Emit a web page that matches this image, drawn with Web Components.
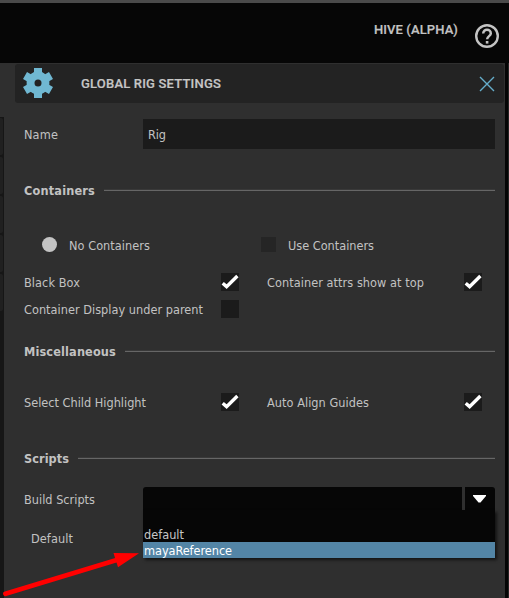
<!DOCTYPE html>
<html lang="en"><head><meta charset="utf-8"><title>Global Rig Settings</title>
<style>
html,body{margin:0;width:509px;height:598px;overflow:hidden;background:#2f2f2f}
</style></head><body>
<rig-window></rig-window>
<script>
const define=(name,html,setup)=>customElements.define(name,class extends HTMLElement{
  connectedCallback(){
    if(this.shadowRoot)return;
    const t=document.createElement('template');t.innerHTML=html;
    this.attachShadow({mode:'open'}).append(t.content.cloneNode(true));
    if(setup)setup(this,this.shadowRoot);
  }
});
/* Text run whose letter spacing is adjusted to fill the width given in "w". */
define('ui-text',`<style>:host{display:block;white-space:nowrap;line-height:18px;flex:none;padding-top:var(--drop,0px)}span{display:inline-block}</style><span><slot></slot></span>`,(el,root)=>{
  const s=root.querySelector('span'),w=+el.getAttribute('w');
  if(w){const n=el.textContent.length;s.style.letterSpacing=((w-s.getBoundingClientRect().width)/n)+'px';}
});
define('check-box',`<style>:host{display:block;flex:none;width:18px;height:18px;background:#1b1b1b}svg{display:none}:host([checked]) svg{display:block}</style>
<svg width="18" height="18" viewBox="0 0 18 18"><path d="M1.7 10.2 5.6 13.6 16.4 3" fill="none" stroke="#fff" stroke-width="3.4"/></svg>`);
define('check-row',`<style>:host{display:grid;grid-template-columns:197px 46px 197px 18px;height:18px;align-items:center;align-content:center}</style><slot></slot>`);
define('section-title',`<style>:host{display:flex;align-items:center;height:20px;font-weight:bold}i{flex:1;height:1px;margin-left:9px;background:#666;box-shadow:0 -1px #393939}</style><slot></slot><i></i>`);
define('top-bar',`<style>:host{display:flex;box-sizing:border-box;height:63px;border-top:3px solid #4a4a4a;background:#060606;color:#c3c3c3;font:500 13px Roboto,sans-serif;--drop:0px;-webkit-text-stroke:.2px;justify-content:flex-end;padding-right:9px}
ui-text{margin-top:18px;margin-right:16px}svg{margin-top:20px}</style>
<ui-text w="84">HIVE (ALPHA)</ui-text>
<svg width="26" height="26" viewBox="0 0 26 26" fill="none" stroke="#c3c3c3"><circle cx="13" cy="13" r="10.8" stroke-width="2.4"/><path d="M9.2 10.5c0-5 7.6-4.8 7.6 0 0 2.5-3.7 2.8-3.7 5.8" stroke-width="2.5"/><path d="M13.1 18v2.6" stroke-width="2.6"/></svg>`);
define('panel-header',`<style>:host{display:flex;align-items:center;height:39px;margin:1px 1px 0 15px;border-radius:3px;background:#232323;color:#c6c6c6;font:500 13px Roboto,sans-serif;--drop:0px;-webkit-text-stroke:.2px}
.gear{margin:0 28px 1px 8px;flex:none}.x{margin:0 9px 0 auto;flex:none}</style>
<svg class="gear" width="30" height="30" viewBox="0 0 30 30"><g fill="#70b8d2"><circle cx="15" cy="15" r="11.4"/><path d="M11 0h8v4.5l2 2H9l2-2z"/><path d="M11 0h8v4.5l2 2H9l2-2z" transform="rotate(60 15 15)"/><path d="M11 0h8v4.5l2 2H9l2-2z" transform="rotate(120 15 15)"/><path d="M11 0h8v4.5l2 2H9l2-2z" transform="rotate(180 15 15)"/><path d="M11 0h8v4.5l2 2H9l2-2z" transform="rotate(240 15 15)"/><path d="M11 0h8v4.5l2 2H9l2-2z" transform="rotate(300 15 15)"/></g><circle cx="15" cy="15" r="3.5" fill="#232323"/></svg>
<ui-text w="140">GLOBAL RIG SETTINGS</ui-text>
<svg class="x" width="16" height="16" viewBox="0 0 16 16"><path d="m1 1 14 14M15 1 1 15" stroke="#65adca" stroke-width="1.4"/></svg>`);
define('container-mode',`<style>:host{display:flex;height:18px;align-items:center;padding-left:18px}i{width:15px;height:15px;flex:none;margin-top:-1px}.on{border-radius:50%;background:#c4c4c4;margin-right:12px}.off{background:#252525;margin:-1px 12px 0 auto}ui-text:last-child{margin-right:121px}</style>
<i class="on"></i><ui-text w="81">No Containers</ui-text><i class="off"></i><ui-text w="86">Use Containers</ui-text>`);
define('script-combo',`<style>:host{display:block;position:relative;width:352px;height:23px;flex:none}
.field{display:flex;height:23px;border-radius:3px 3px 0 0;background:#060606;overflow:hidden}.split{width:3px;margin-left:319px;background:#2f2f2f}.field svg{margin:8px 0 0 8px}
.menu{position:absolute;z-index:1;left:0;right:0;top:23px;height:48px;box-sizing:border-box;padding-top:16px;background:#060606;box-shadow:2px 2px 3px #0009;color:#c6c6c6;--drop:1px}
.menu div{height:16px;padding-left:1px}.menu ui-text{line-height:15px}.menu .sel{background:#5385a6;color:#fff}</style>
<div class="field"><span class="split"></span><svg width="14" height="8"><path d="M0 0h13v1L7.5 7.5h-2L0 1z" fill="#fff"/></svg></div>
<div class="menu"><div><ui-text w="40">default</ui-text></div><div class="sel"><ui-text w="88">mayaReference</ui-text></div></div>`);
define('side-strip',`<style>:host{display:flex;flex-direction:column;width:4px;height:481px;box-sizing:border-box;padding-top:1px;background:#161616;gap:2px}i{display:block;height:37px;width:3px;background:#202020;border-radius:0 2px 2px 0}</style><i></i><i></i><i></i><i></i><i></i>`);
define('rig-window',`<style>
:host{display:block;position:relative;width:509px;height:598px;overflow:hidden;background:#2f2f2f;color:#c2c2c2;font:12.6px "DejaVu Sans Condensed","DejaVu Sans",sans-serif;font-stretch:condensed;--drop:2px}
.body{display:grid;grid-template-columns:505px 4px;height:535px}.edge{background:#050505;border-right:1px solid #252525}
.panel{background:#2f2f2f}.below{display:grid;grid-template-columns:4px 471px;column-gap:20px;align-items:start}
side-strip{margin-top:14px}.form{padding-top:16px}
.field{display:flex;align-items:center;height:30px}.input{box-sizing:border-box;width:352px;height:30px;padding:5px;background:#1b1b1b;margin-left:auto}
.arrow{position:absolute;left:0;top:545px}
</style>
<top-bar></top-bar>
<div class="body"><div class="panel"><panel-header></panel-header>
<div class="below"><side-strip></side-strip><div class="form">
<div class="field"><ui-text w="34">Name</ui-text><div class="input"><ui-text w="18">Rig</ui-text></div></div>
<section-title style="margin-top:31px"><ui-text w="71">Containers</ui-text></section-title>
<container-mode style="margin-top:36px"></container-mode>
<check-row style="margin-top:19px"><ui-text w="56">Black Box</ui-text><check-box checked></check-box><ui-text w="157">Container attrs show at top</ui-text><check-box checked></check-box></check-row>
<check-row style="margin-top:9px"><ui-text w="179">Container Display under parent</ui-text><check-box></check-box></check-row>
<section-title style="margin-top:23px"><ui-text w="92">Miscellaneous</ui-text></section-title>
<check-row style="margin-top:32px"><ui-text w="122">Select Child Highlight</ui-text><check-box checked></check-box><ui-text w="102">Auto Align Guides</ui-text><check-box checked></check-box></check-row>
<section-title style="margin-top:37px"><ui-text w="45">Scripts</ui-text></section-title>
<div class="field" style="height:23px;margin-top:19px"><ui-text w="71">Build Scripts</ui-text><script-combo style="margin-left:auto"></script-combo></div>
<div class="field" style="height:20px;margin:18px 0 0 7px"><ui-text w="42">Default</ui-text></div>
</div></div></div><div class="edge"></div></div>
<svg class="arrow" width="145" height="53" viewBox="0 0 145 53"><path d="M5.5 48.8 120 14" stroke="red" stroke-width="4.8" stroke-linecap="round"/><path d="M113.5 8 139 8.2 118 22.2z" fill="red"/></svg>`);
</script></body></html>
